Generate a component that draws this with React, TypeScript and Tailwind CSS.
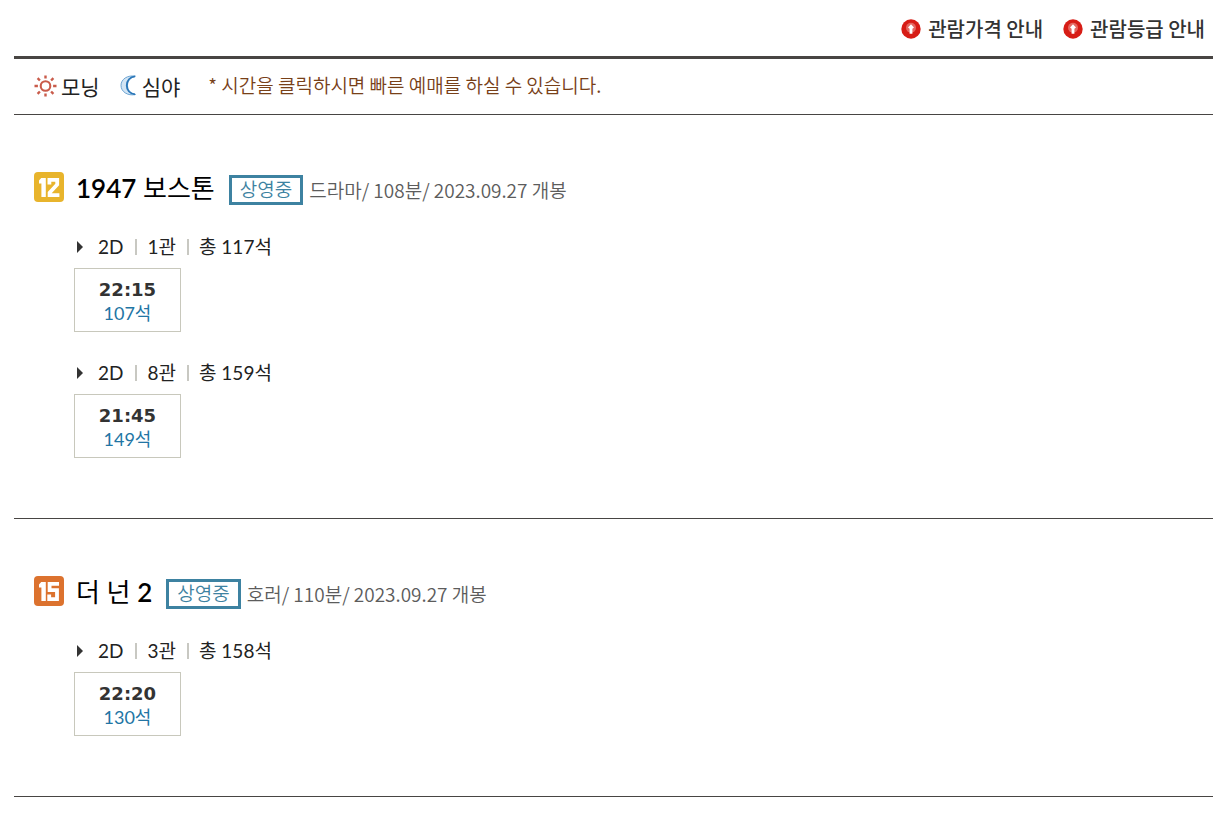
interface Hall {
  type: string;
  name: string;
  total: string;
  time: string;
  left: string;
}

interface Movie {
  rating: 12 | 15;
  title: string;
  genre: string;
  runtime: string;
  release: string;
  halls: Hall[];
}

const movies: Movie[] = [
  {
    rating: 12,
    title: '1947 보스톤',
    genre: '드라마',
    runtime: '108분',
    release: '2023.09.27 개봉',
    halls: [
      { type: '2D', name: '1관', total: '총 117석', time: '22:15', left: '107석' },
      { type: '2D', name: '8관', total: '총 159석', time: '21:45', left: '149석' },
    ],
  },
  {
    rating: 15,
    title: '더 넌 2',
    genre: '호러',
    runtime: '110분',
    release: '2023.09.27 개봉',
    halls: [
      { type: '2D', name: '3관', total: '총 158석', time: '22:20', left: '130석' },
    ],
  },
];

const guides = ['관람가격 안내', '관람등급 안내'];

function GuideIcon() {
  return (
    <svg width="20" height="20" viewBox="0 0 20 20" aria-hidden="true">
      <circle cx="10" cy="10" r="9.7" fill="#d71d16" />
      <circle cx="10" cy="8.8" r="5" fill="#ef9993" opacity="0.6" />
      <path d="M10 5.2 7 8.6l1.6 1.2v5h2.8v-5L13 8.6Z" fill="#fff" />
    </svg>
  );
}

function SunIcon() {
  return (
    <svg width="23" height="22" viewBox="0 0 23 22" fill="none" stroke="#c95b4a" aria-hidden="true">
      <circle cx="11.5" cy="11" r="4.8" strokeWidth="2.1" />
      <path
        d="M11.5 .6v3M11.5 18.4v3M.5 11h3.4M19.1 11h3.4M3.6 3.2l2.3 2.3M17.1 16.5l2.3 2.3M19.4 3.2l-2.3 2.3M5.9 16.5l-2.3 2.3"
        strokeWidth="2.4"
      />
    </svg>
  );
}

function MoonIcon() {
  return (
    <svg width="17" height="21" viewBox="0 0 17 21" aria-hidden="true">
      <path
        d="M15.5 1.2C7.5-.2 1 4.2 1 10.4c0 6.3 6.6 10.8 14.6 9.1C10.2 18.2 7.5 15 7.5 10.4c0-4.5 3-7.8 8-9.2Z"
        fill="#d3e5f4"
        stroke="#6ca4d3"
      />
      <path d="M15 1.4C10 2 6.8 5.6 6.8 10.4s3.2 8.3 8.2 9" fill="none" stroke="#2b77b8" strokeWidth="1.9" />
    </svg>
  );
}

function RatingIcon({ rating }: { rating: 12 | 15 }) {
  return (
    <svg
      width="30"
      height="30"
      viewBox="0 0 30 30"
      className="mr-3 shrink-0 self-start"
      role="img"
      aria-label={`${rating}세 이상`}
    >
      <rect width="30" height="30" rx="4" fill={rating === 12 ? '#e8b42c' : '#dc722e'} />
      {/* the numerals are part of the badge artwork */}
      <path d="M7.2 6h4.6v19H7.4V11.6H5V8.4Z" fill="#fff" />
      <g fill="none" stroke="#fff" strokeWidth="3.8">
        {rating === 12 ? (
          <path d="M15.4 12.4V7.9h7.8v4.6l-7.6 8.2v2.4h9.8" />
        ) : (
          <path d="M25 7.9h-9.4v6.2h7.4v9h-7.8v-4.6" />
        )}
      </g>
    </svg>
  );
}

// Digits in a title are set heavier than the Hangul around them
function MovieTitle({ title }: { title: string }) {
  return (
    <h2 className="text-[26px] leading-8 font-normal text-black">
      {title.split(/(\d+)/).map((part, i) =>
        /^\d+$/.test(part) ? (
          <span key={i} className="font-semibold">
            {part}
          </span>
        ) : (
          part
        )
      )}
    </h2>
  );
}

function HallInfo({ hall }: { hall: Hall }) {
  return (
    <div>
      <ul className="flex h-7 items-center text-[19px] leading-7 text-[#222]">
        <li className="flex items-center">
          <svg width="8" height="12" viewBox="0 0 8 12" className="mr-[14px] ml-[2px] shrink-0" aria-hidden="true">
            <path d="M1 0v12l6-6Z" fill="#333" />
          </svg>
          {hall.type}
        </li>
        <li className="ml-3 flex items-center">
          <span className="mr-[10px] h-4 w-[2px] bg-[#c8c8c2]" />
          {hall.name}
        </li>
        <li className="ml-[11px] flex items-center">
          <span className="mr-[10px] h-4 w-[2px] bg-[#c8c8c2]" />
          {hall.total}
        </li>
      </ul>
      <button
        type="button"
        className="mt-[7px] flex h-16 w-[107px] cursor-pointer flex-col items-center justify-center border border-[#c8c8bc] pt-[2px]"
      >
        <em className="font-['DejaVu_Sans',sans-serif] text-lg leading-6 font-bold text-[#333] not-italic">
          {hall.time}
        </em>
        <span className="text-lg leading-[23px] text-[#2275a4]">{hall.left}</span>
      </button>
    </div>
  );
}

export default function App() {
  return (
    <main className="bg-white px-[14px] pb-6 font-['Lato','Noto_Sans_CJK_KR',sans-serif] text-[19px] text-[#222]">
      {/* Guide links */}
      <nav className="flex h-14 items-center justify-end gap-5 pt-[2px] pr-2 font-['Noto_Sans_CJK_KR',sans-serif] text-xl font-medium text-[#333]">
        {guides.map((guide) => (
          <a key={guide} href="#" className="flex items-center gap-[7px]">
            <GuideIcon />
            {guide}
          </a>
        ))}
      </nav>

      {/* Legend */}
      <div className="flex h-[59px] items-center border-t-[3px] border-b border-[#484543] pb-[2px] pl-5 font-['Noto_Sans_CJK_KR',sans-serif]">
        <span className="flex items-center gap-1 text-[21px] leading-7">
          <SunIcon />
          모닝
        </span>
        <span className="ml-5 flex items-center gap-[5px] text-[21px] leading-7">
          <MoonIcon />
          심야
        </span>
        <p className="ml-7 font-[350] text-[#784018]">* 시간을 클릭하시면 빠른 예매를 하실 수 있습니다.</p>
      </div>

      {/* Showtimes */}
      {movies.map((movie) => (
        <section key={movie.title} className="border-b border-[#484543] px-5 pt-[57px] pb-[60px]">
          <div className="flex h-8 items-center">
            <RatingIcon rating={movie.rating} />
            <MovieTitle title={movie.title} />
            <span className="mt-1 ml-[14px] flex h-[30px] items-center border-[3px] border-[#3d82a1] px-2 font-[350] text-[#3d82a1]">
              상영중
            </span>
            <p className="mt-1 ml-[6px] font-['Noto_Sans_CJK_KR',sans-serif] font-[350] text-[#5c5c5c]">
              {movie.genre}/ {movie.runtime}/ {movie.release}
            </p>
          </div>
          <div className="mt-[29px] flex flex-col gap-[27px] pl-10">
            {movie.halls.map((hall) => (
              <HallInfo key={hall.name} hall={hall} />
            ))}
          </div>
        </section>
      ))}
    </main>
  );
}
